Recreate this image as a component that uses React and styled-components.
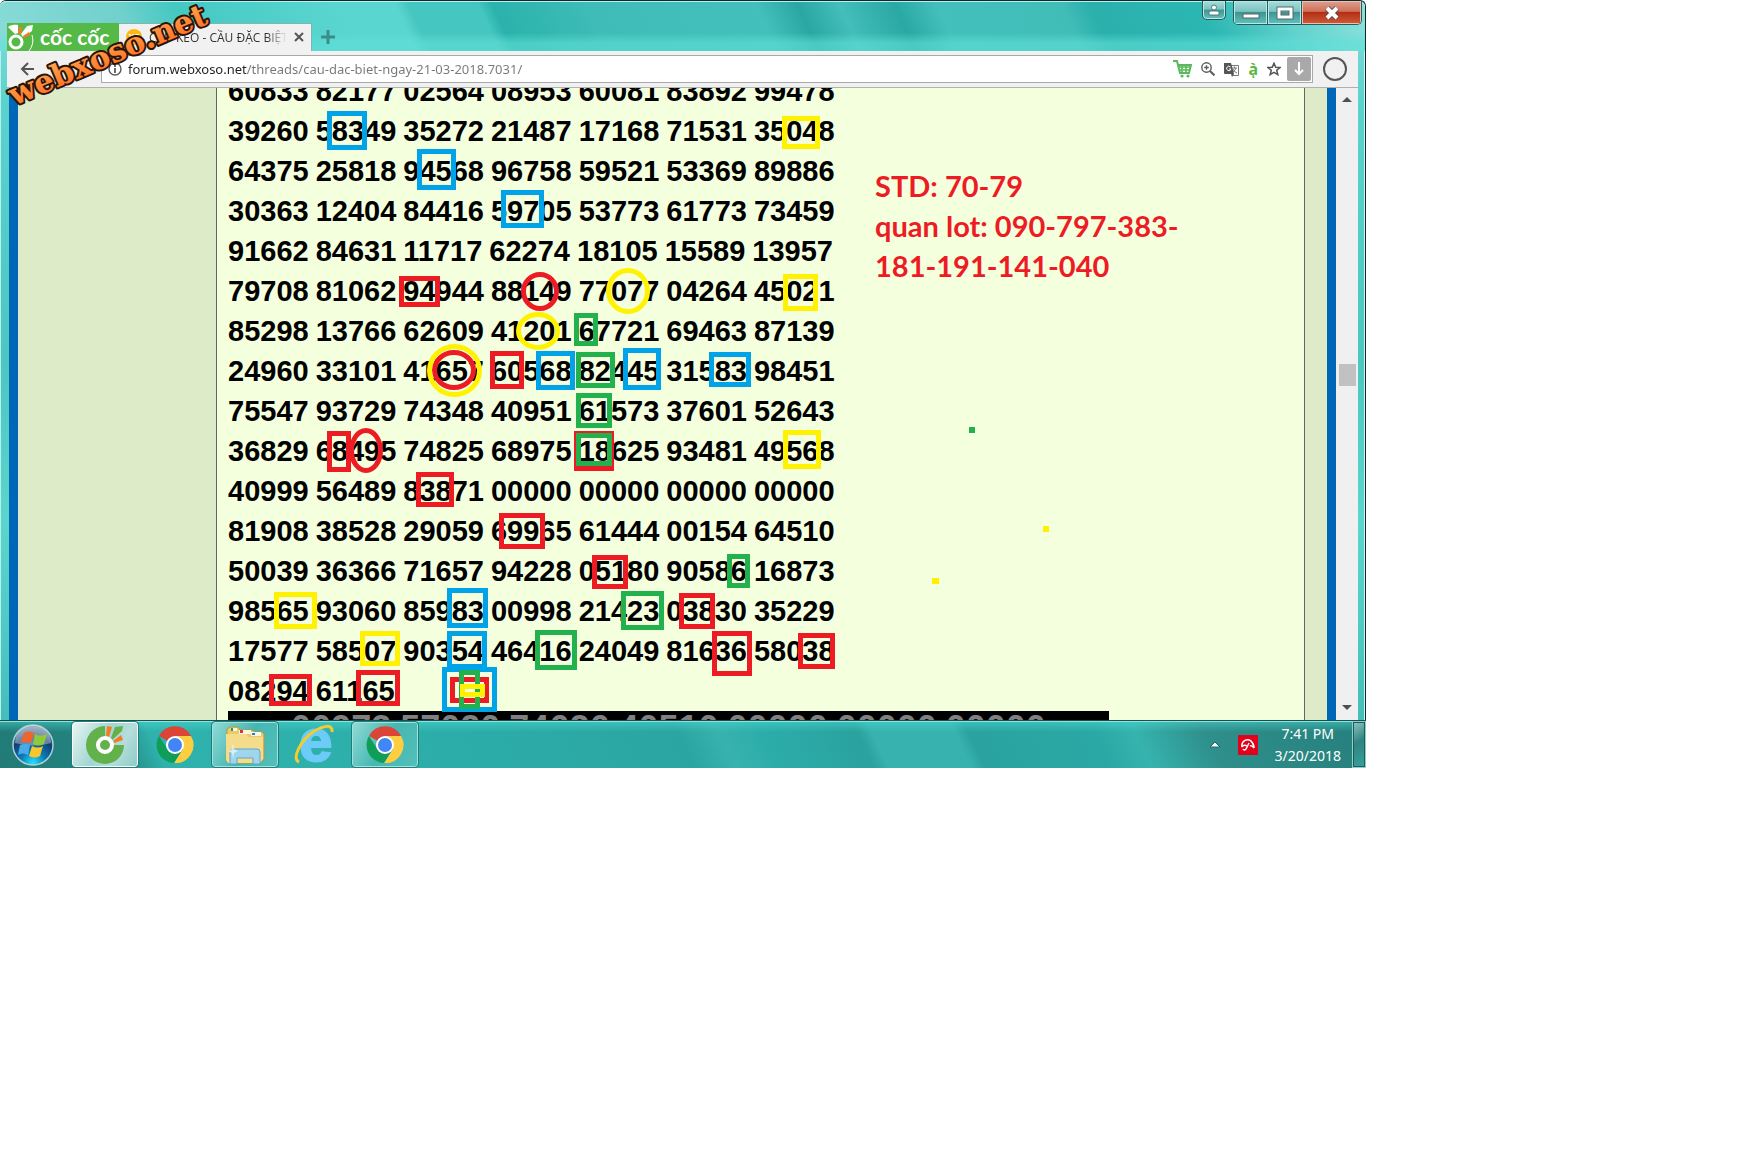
import React from "react";
import styled, { createGlobalStyle, css } from "styled-components";

//DATA
const rows = [
  "60833 82177 02564 08953 60081 83892 99478",
  "39260 58349 35272 21487 17168 71531 35048",
  "64375 25818 94568 96758 59521 53369 89886",
  "30363 12404 84416 59705 53773 61773 73459",
  "91662 84631 11717 62274 18105 15589 13957",
  "79708 81062 94944 88149 77077 04264 45021",
  "85298 13766 62609 41201 67721 69463 87139",
  "24960 33101 41657 60568 82445 31583 98451",
  "75547 93729 74348 40951 61573 37601 52643",
  "36829 68495 74825 68975 18625 93481 49568",
  "40999 56489 83871 00000 00000 00000 00000",
  "81908 38528 29059 69965 61444 00154 64510",
  "50039 36366 71657 94228 05180 90586 16873",
  "98565 93060 85983 00998 21423 03830 35229",
  "17577 58507 90354 46416 24049 81636 58038",
  "08294 61165",
];
const hiddenRow = "00973 57020 74626 40510 00000 00000 00000";

const red = "#ed1c24";
const blue = "#00a2e8";
const green = "#22b14c";
const yellow = "#fff200";

// outer edges of every mark: colour, left, top, right, bottom
const boxes = [
  [blue, 327, 111, 367, 150],
  [blue, 417, 149, 456, 190],
  [blue, 501, 190, 544, 228],
  [yellow, 782, 116, 820, 149],
  [red, 399, 276, 440, 307],
  [yellow, 783, 274, 818, 311],
  [green, 574, 313, 598, 346],
  [red, 490, 351, 524, 389],
  [blue, 536, 351, 575, 390],
  [green, 576, 352, 615, 388],
  [blue, 623, 348, 661, 390],
  [blue, 709, 352, 751, 387],
  [green, 576, 393, 612, 428],
  [red, 574, 431, 614, 471],
  [green, 576, 433, 612, 466],
  [yellow, 783, 430, 821, 469],
  [red, 327, 431, 351, 472],
  [red, 416, 472, 454, 507],
  [red, 499, 513, 545, 549],
  [red, 592, 555, 628, 589],
  [green, 727, 554, 750, 588],
  [yellow, 274, 592, 317, 629],
  [blue, 447, 588, 488, 628],
  [green, 621, 591, 664, 630],
  [red, 679, 593, 715, 629],
  [yellow, 360, 631, 400, 666],
  [blue, 447, 631, 487, 669],
  [green, 535, 630, 577, 670],
  [red, 712, 631, 752, 676],
  [red, 798, 633, 835, 669],
  [red, 269, 674, 312, 706],
  [red, 356, 670, 400, 706],
  [blue, 442, 667, 497, 712],
  [red, 450, 677, 489, 703],
  [green, 459, 670, 480, 709],
  [yellow, 460, 684, 485, 697],
];
const rings = [
  [red, 521, 272, 559, 311],
  [yellow, 606, 268, 650, 314],
  [yellow, 516, 312, 560, 350],
  [red, 432, 350, 476, 390],
  [yellow, 427, 344, 482, 397],
  [red, 349, 428, 383, 473],
];
const dots = [
  [green, 969, 427, 6],
  [yellow, 1043, 526, 6],
  [yellow, 932, 578, 7],
];

//ICONS
const Hand = () => (
  <svg width="28" height="28" viewBox="0 0 28 28">
    <circle cx="9" cy="19" r="6" fill="none" stroke="#fff" strokeWidth="3" />
    <path d="M1 4C5 1 11 2 11 2L11 10L8 11ZM14 11L20 3L26 2L25 8L16 14Z" fill="#fff" />
    <path d="M11 10L12 4L15 4L14 11ZM16 13L22 9L23 12L17 15Z" fill="#f47b20" />
    <path d="M25 12C27 19 25 24 22 28" fill="none" stroke="#fff" strokeWidth="1" />
  </svg>
);

const Chrome = () => (
  <svg width="38" height="38" viewBox="0 0 38 38">
    <path d="M19 19L3 10A18 18 0 0 1 35 10L19 10Z" fill="#db4437" />
    <path d="M19 10L35 10A18 18 0 0 1 18 37L27 23Z" fill="#ffcd40" />
    <path d="M3 10A18 18 0 0 0 18 37L26 24L12 24Z" fill="#0f9d58" />
    <circle cx="19" cy="19" r="9" fill="#fff" />
    <circle cx="19" cy="19" r="7" fill="#4285f4" />
  </svg>
);

const CocCoc = () => (
  <svg width="40" height="40" viewBox="0 0 40 40">
    <path d="M20 1A19 19 0 1 0 39 20L29 20L20 11Z" fill="#63b14b" />
    <path d="M22 1L27 2L24 12L21 11Z" fill="#f47b20" />
    <path d="M36 10L38 15L29 18L28 16Z" fill="#f47b20" />
    <path d="M30 2L38 1L37 6L27 15L26 13Z" fill="#63b14b" />
    <circle cx="20" cy="20" r="7" fill="#63b14b" stroke="#fff" strokeWidth="4" />
  </svg>
);

const Folder = () => (
  <svg width="42" height="40" viewBox="0 0 42 40">
    <path d="M3 4L6 2H14L16 5H28L31 7H38L40 9V34L36 38H4L2 34Z" fill="#e9cb6a" stroke="#b8963a" />
    <path d="M7 3H13V6H7Z" fill="#f7f7ee" />
    <path d="M15 5H27V9H15ZM27 7H37V11H27Z" fill="#f9f6e4" />
    <path d="M7 3H9V6H7Z" fill="#2c9d48" />
    <path d="M16 5H19V8H16Z" fill="#d33" />
    <path d="M28 8H31V10H28Z" fill="#2a7fc7" />
    <path d="M2 9H22L24 12H39V34L36 38H4L2 35Z" fill="#f4dc8b" />
    <path d="M6 39V27Q6 24 9 24H33Q36 24 36 27V39H29V33H13V39Z" fill="#9fd6ee" stroke="#5fa6cd" />
    <path d="M9 18L10 24L14 26L10 28L9 34L8 28L4 26L8 24Z" fill="#fff" opacity="0.6" />
  </svg>
);

const Explorer = () => (
  <svg width="42" height="42" viewBox="0 0 42 42">
    <text
      x="5"
      y="37"
      fontFamily="Liberation Sans"
      fontWeight="700"
      fontSize="60"
      fill="#6ccbf7"
      stroke="#6ccbf7"
      strokeWidth="2"
    >
      e
    </text>
    <path d="M5 38C-3 35 7 16 19 8C30 1 39 0 38 8" fill="none" stroke="#f5cb2d" strokeWidth="3" />
  </svg>
);

const Orb = () => (
  <svg width="44" height="44" viewBox="0 0 44 44">
    <defs>
      <radialGradient id="orb" cx="0.5" cy="0.95" r="0.9">
        <stop offset="0" stopColor="#27e3ff" />
        <stop offset="0.35" stopColor="#0a7ab5" />
        <stop offset="0.7" stopColor="#123e72" />
        <stop offset="1" stopColor="#6b8aa5" />
      </radialGradient>
    </defs>
    <circle cx="22" cy="22" r="20" fill="url(#orb)" stroke="#a7cfd6" strokeWidth="1.5" />
    <path d="M4 20A18 18 0 0 1 40 20Q22 25 4 20Z" fill="#fff" opacity="0.35" />
    <path d="M13 10Q18 7 23 10L20 20Q15 18 10 20Z" fill="#f0652b" />
    <path d="M24 11Q29 14 36 11L33 21Q27 24 22 21Z" fill="#8ecb3c" />
    <path d="M9 22Q14 20 19 22L17 32Q12 29 7 32Z" fill="#4aa9e8" />
    <path d="M21 23Q27 26 32 23L29 33Q24 36 18 33Z" fill="#fbc52c" />
  </svg>
);

const Cart = () => (
  <svg width="20" height="20" viewBox="0 0 20 20">
    <path d="M1 2H5L8 14H17L19 6H6" fill="none" stroke="#5cb85c" strokeWidth="2" />
    <path d="M6 8H18M7 11H17M10 6V14M14 6V14" stroke="#5cb85c" strokeWidth="1.6" />
    <circle cx="10" cy="17" r="1.6" fill="#5cb85c" />
    <circle cx="16" cy="17" r="1.6" fill="#5cb85c" />
  </svg>
);

const Zoom = () => (
  <svg width="14" height="14" viewBox="0 0 14 14" fill="none" stroke="#5a5a5a">
    <circle cx="5.5" cy="5.5" r="4.7" strokeWidth="1.4" />
    <path d="M9 9L13.4 13.4" strokeWidth="2" />
    <path d="M5.5 3.2V7.8M3.2 5.5H7.8" strokeWidth="1.3" />
  </svg>
);

const Translate = () => (
  <svg width="15" height="15" viewBox="0 0 15 15">
    <path d="M6.5 3.5H14.5V13.5H9" fill="#fff" stroke="#777" />
    <path d="M8 6H13M10.5 4.5V6M12 6Q11 9 8 11M9 7Q10 10 13 11" fill="none" stroke="#777" />
    <path d="M0 1H7L10 12H1Q0 12 0 11Z" fill="#555" />
    <path d="M6.5 5A2.2 2.2 0 1 0 7 7H5" fill="none" stroke="#fff" />
    <path d="M7 12H10L8 15Z" fill="#555" />
  </svg>
);

const Star = () => (
  <svg width="14" height="14" viewBox="0 0 14 14">
    <path
      d="M7 1.2L8.7 5.2L13 5.5L9.7 8.3L10.8 12.6L7 10.3L3.2 12.6L4.3 8.3L1 5.5L5.3 5.2Z"
      fill="none"
      stroke="#555"
      strokeWidth="1.5"
    />
  </svg>
);

const Umbrella = () => (
  <svg width="20" height="20" viewBox="0 0 20 20">
    <rect width="20" height="20" rx="1" fill="#e2001a" />
    <path d="M4 12C3 6 9 3 13 6Q16 9 16 13" fill="none" stroke="#fff" strokeWidth="1.6" />
    <path d="M4 12Q6 9 9 11M16 13Q14 10 12 11" fill="none" stroke="#fff" strokeWidth="1.4" />
    <path d="M11 8L8 14Q6 16 5 14" fill="none" stroke="#fff" strokeWidth="1.4" />
  </svg>
);

const Watermark = () => (
  <Logo viewBox="0 0 230 120">
    <defs>
      <linearGradient id="flame" x1="0" y1="0" x2="0" y2="1">
        <stop offset="0.2" stopColor="#ffa04c" />
        <stop offset="1" stopColor="#ff6a1c" />
      </linearGradient>
    </defs>
    <text x="14" y="105" transform="rotate(-23 14 105)">
      webxoso.net
    </text>
  </Logo>
);

const Marks = () => (
  <Overlay aria-hidden="true">
    <g transform="translate(-217 -88)" fill="none" strokeWidth="5">
      {boxes.map(([color, x, y, right, bottom]) => (
        <rect
          key={`${x}-${y}`}
          x={x + 2.5}
          y={y + 2.5}
          width={right - x - 5}
          height={bottom - y - 5}
          stroke={color}
        />
      ))}
      {rings.map(([color, x, y, right, bottom]) => (
        <ellipse
          key={`${x}-${y}`}
          cx={(x + right) / 2}
          cy={(y + bottom) / 2}
          rx={(right - x - 5) / 2}
          ry={(bottom - y - 5) / 2}
          stroke={color}
        />
      ))}
      {dots.map(([color, x, y, width]) => (
        <rect key={x} x={x} y={y} width={width} height="6" fill={color} stroke="none" />
      ))}
    </g>
  </Overlay>
);

const Groups = ({ text }) => text.split(" ").map((group, i) => <span key={i}>{group} </span>);

const App = () => {
  return (
    <>
      <GlobalStyle />
      <Desktop>
        <Window>
          <TitleBar>
            <Brand type="button">
              <Hand />
              cốc cốc
            </Brand>
            <Tab>
              <Favicon>XS</Favicon>
              <TabTitle>CẦU KÈO - CẦU ĐẶC BIỆT</TabTitle>
              <PlainButton aria-label="Close tab">
                <svg width="10" height="10" stroke="#555" strokeWidth="2">
                  <path d="M1 1L9 9M9 1L1 9" />
                </svg>
              </PlainButton>
            </Tab>
            <NewTab aria-label="New tab">
              <svg width="14" height="14" stroke="#3a8d89" strokeWidth="3">
                <path d="M7 0V14M0 7H14" />
              </svg>
            </NewTab>
            <Controls>
              <UserButton aria-label="User">
                <svg width="12" height="12" fill="#fff" stroke="#4b7f80">
                  <circle cx="6" cy="3.5" r="2.5" />
                  <path d="M1 11V8Q1 7 3 7H9Q11 7 11 8V11Z" />
                </svg>
              </UserButton>
              <ControlGroup>
                <Control aria-label="Minimize">
                  <svg width="18" height="16">
                    <rect x="1" y="9" width="16" height="4" fill="#fff" stroke="#57696b" />
                  </svg>
                </Control>
                <Control aria-label="Maximize">
                  <svg width="18" height="16" fill="none">
                    <rect x="3" y="4" width="12" height="8" stroke="#57696b" strokeWidth="5" />
                    <rect x="3" y="4" width="12" height="8" stroke="#fff" strokeWidth="3" />
                  </svg>
                </Control>
                <Control $close aria-label="Close">
                  <svg width="18" height="16">
                    <path d="M4 3L14 13M14 3L4 13" stroke="#5a4b50" strokeWidth="6" />
                    <path d="M4 3L14 13M14 3L4 13" stroke="#fff" strokeWidth="4" />
                  </svg>
                </Control>
              </ControlGroup>
            </Controls>
          </TitleBar>
          <ToolBar>
            <Nav>
              <PlainButton aria-label="Back">
                <svg width="14" height="14" fill="none" stroke="#555" strokeWidth="2">
                  <path d="M14 7H2M8 1L2 7L8 13" />
                </svg>
              </PlainButton>
            </Nav>
            <AddressBar>
              <svg width="14" height="14" fill="none" stroke="#5a5a5a">
                <circle cx="7" cy="7" r="6" strokeWidth="1.4" />
                <path d="M7 6V11M7 3V5" strokeWidth="1.8" />
              </svg>
              <Address
                aria-label="Address"
                defaultValue="forum.webxoso.net/threads/cau-dac-biet-ngay-21-03-2018.7031/"
              />
              <Actions>
                <Cart />
                <Zoom />
                <Translate />
                <Accent>à̩</Accent>
                <Star />
              </Actions>
              <Download aria-label="Download">
                <svg width="14" height="16" fill="none" stroke="#fff" strokeWidth="2">
                  <path d="M7 1V13M3 9L7 13L11 9" />
                </svg>
              </Download>
            </AddressBar>
            <Profile aria-label="Menu" />
          </ToolBar>
          <Page>
            <Post>
              <Board>
                <Numbers>
                  {rows.map((row) => (
                    <Row key={row}>
                      <Groups text={row} />
                    </Row>
                  ))}
                </Numbers>
                <Note>
                  STD: 70-79
                  <br />
                  quan lot: 090-797-383-
                  <br />
                  181-191-141-040
                </Note>
              </Board>
              <HiddenRow>
                <Groups text={hiddenRow} />
              </HiddenRow>
              <Marks />
            </Post>
            <Edge />
            <ScrollBar>
              <svg width="10" height="6" fill="#505050">
                <path d="M0 5L5 0L10 5Z" />
              </svg>
              <Thumb />
              <svg width="10" height="6" fill="#505050">
                <path d="M0 0L5 5L10 0Z" />
              </svg>
            </ScrollBar>
          </Page>
          <Watermark />
        </Window>
        <TaskBar>
          <Start aria-label="Start">
            <Orb />
          </Start>
          <Tasks>
            <Task $active aria-label="Cốc Cốc">
              <CocCoc />
            </Task>
            <Task aria-label="Chrome">
              <Chrome />
            </Task>
            <Task $open aria-label="Files">
              <Folder />
            </Task>
            <Task aria-label="Internet Explorer">
              <Explorer />
            </Task>
            <Task $open aria-label="Chrome window">
              <Chrome />
            </Task>
          </Tasks>
          <Tray>
            <svg width="12" height="7" fill="#fff" stroke="#1d6b69">
              <path d="M1 6L6 1L11 6Z" />
            </svg>
            <Umbrella />
            <Clock>
              7:41 PM
              <br />
              3/20/2018
            </Clock>
          </Tray>
          <ShowDesktop aria-label="Show desktop" />
        </TaskBar>
      </Desktop>
    </>
  );
};

//STYLING
const GlobalStyle = createGlobalStyle`
  * {
    box-sizing: border-box;
  }
  body {
    margin: 0;
    background: #fff;
    font-family: "Open Sans", "Noto Sans", sans-serif;
  }
  button {
    border: none;
    padding: 0;
    background: none;
    font: inherit;
  }
  svg {
    display: block;
    flex-shrink: 0;
  }
`;

const Desktop = styled.main`
  width: calc(100% - 374px);
  min-width: 1200px;
`;
const Window = styled.section`
  position: relative;
  border: 1px solid #10292b;
  border-width: 1px 1px 0 0;
  border-radius: 6px 6px 0 0;
  box-shadow: inset 1px 1px #b9efec, inset -1px 0 #c8f4f1;
  background: linear-gradient(#8adcd8, #5ad3cf 100px, #4bc6c0 360px, #5ad6cf 520px, #45beb9);
`;
const TitleBar = styled.header`
  display: flex;
  align-items: flex-end;
  height: 50px;
  padding: 0 3px 0 7px;
  border-radius: 6px 6px 0 0;
  box-shadow: inset 0 1px #b9efec;
  background: linear-gradient(transparent 32px, rgba(96, 224, 216, 0.6) 42px),
    linear-gradient(
      65deg,
      #8adcd8 0%,
      #70d0cc 10%,
      #45c8c2 14%,
      #5ad6d0 26%,
      #5ad6d0 30%,
      #46c6c0 31%,
      #46c6c0 36%,
      #2bb2ac 37%,
      #3fbcb7 44%,
      #43c0bc 56%,
      #2aa7a3 59%,
      #43beba 62%,
      #2aa8a4 66%,
      #43c0bc 69%,
      #41bdb8 78%,
      #2bb0ac 80%,
      #2cb7b3 88%,
      #62d2cd 94%,
      #8de2dd 100%
    );
`;
const Brand = styled.button`
  display: flex;
  align-items: center;
  gap: 5px;
  width: 112px;
  height: 28px;
  background: #55b948;
  color: #fff;
  font-family: Lato, "Noto Sans", sans-serif;
  font-size: 21px;
  font-weight: 700;
  line-height: 28px;
  white-space: nowrap;
`;
const Tab = styled.div`
  display: flex;
  align-items: center;
  gap: 7px;
  width: 193px;
  height: 28px;
  padding: 0 8px 0 7px;
  background: #f1f1f1;
  box-shadow: inset -1px 1px #7fb5b2;
`;
const Favicon = styled.span`
  width: 16px;
  height: 16px;
  border-radius: 50%;
  background: #fdb813;
  color: #fff;
  font-size: 9px;
  font-weight: 700;
  line-height: 16px;
  text-align: center;
`;
const TabTitle = styled.span`
  flex: 1;
  overflow: hidden;
  color: #333;
  font-size: 12px;
  white-space: nowrap;
  mask-image: linear-gradient(90deg, #000 85%, transparent);
`;
const PlainButton = styled.button`
  display: flex;
`;
const NewTab = styled(PlainButton)`
  align-self: flex-end;
  padding: 7px 9px;
`;
const Controls = styled.div`
  display: flex;
  align-self: flex-start;
  gap: 7px;
  margin-left: auto;
`;
const glass = css`
  display: flex;
  align-items: center;
  justify-content: center;
  background: linear-gradient(#a4dedc, #7cc3c1 45%, #3f9491 50%, #62c2be);
`;
const UserButton = styled.button`
  ${glass}
  width: 24px;
  height: 19px;
  border: 1px solid #2a5a5b;
  border-top: none;
  border-radius: 0 0 5px 5px;
  box-shadow: inset 0 0 0 1px #b9e9e6;
`;
const ControlGroup = styled.div`
  display: flex;
  height: 24px;
  border: 1px solid #2a5a5b;
  border-top: none;
  border-radius: 0 0 5px 5px;
  overflow: hidden;
`;
const Control = styled.button`
  ${glass}
  width: 34px;
  border-right: 1px solid #2a5a5b;
  box-shadow: inset 0 0 0 1px #b9e9e6;
  ${({ $close }) =>
    $close &&
    css`
      width: 59px;
      border-right: none;
      background: linear-gradient(#dfa090, #cf7058 45%, #b32f14 50%, #cf5c3c);
      box-shadow: inset 0 0 0 1px #ecc0b4;
    `}
`;
const ToolBar = styled.div`
  display: flex;
  align-items: center;
  height: 37px;
  margin: 0 7px;
  border-bottom: 1px solid #b0b0b0;
  background: #f1f1f1;
`;
const Nav = styled.nav`
  width: 94px;
  padding-left: 13px;
`;
const AddressBar = styled.div`
  display: flex;
  flex: 1;
  align-items: center;
  height: 28px;
  padding: 0 1px 0 6px;
  border: 1px solid #a9a9a9;
  background: #fff;
`;
const Address = styled.input`
  flex: 1;
  min-width: 0;
  padding: 0 6px;
  border: none;
  outline: none;
  background: linear-gradient(90deg, #222 125px, #777 125px);
  background-clip: text;
  color: transparent;
  font-family: "Noto Sans", sans-serif;
  font-size: 13px;
`;
const Actions = styled.div`
  display: flex;
  align-items: center;
  gap: 9px;
  margin-right: 6px;
`;
const Accent = styled.span`
  color: #5cb83c;
  font-size: 16px;
  font-weight: 700;
  line-height: 20px;
`;
const Download = styled.button`
  display: flex;
  align-items: center;
  justify-content: center;
  width: 24px;
  height: 24px;
  border-radius: 2px;
  background: #a9a9a9;
`;
const Profile = styled.button`
  width: 24px;
  height: 24px;
  margin: 0 11px 0 10px;
  border: 2px solid #555;
  border-radius: 50%;
`;
const Page = styled.div`
  display: flex;
  margin: 0 7px 0 9px;
  border-left: 9px solid #0066b8;
  background: #deebc8;
`;
const Post = styled.article`
  position: relative;
  flex: 1;
  margin-left: 198px;
  padding-left: 11px;
  border: 1px solid #666;
  border-width: 0 1px;
  overflow: hidden;
  background: #f4ffde;
`;
const Board = styled.div`
  display: flex;
  margin-top: -17px;
`;
const Numbers = styled.div`
  width: 647px;
`;
const Row = styled.p`
  display: flex;
  gap: 7px;
  margin: 0;
  color: #000;
  font-family: "Liberation Sans", Arial, sans-serif;
  font-size: 29px;
  font-weight: 700;
  line-height: 40px;
`;
const Note = styled.p`
  margin: 95px 0 0;
  color: #ed1c24;
  font-family: Lato, Carlito, sans-serif;
  font-size: 29px;
  font-weight: 700;
  line-height: 40px;
  white-space: nowrap;
`;
const HiddenRow = styled(Row)`
  justify-content: center;
  gap: 9px;
  width: 881px;
  height: 9px;
  overflow: hidden;
  background: #000;
  color: #808080;
  font-size: 36px;
  line-height: 36px;
`;
const Overlay = styled.svg`
  position: absolute;
  top: 0;
  left: 0;
  width: 100%;
  height: 100%;
`;
const Edge = styled.div`
  width: 31px;
  border-right: 9px solid #0066b8;
`;
const ScrollBar = styled.div`
  display: grid;
  grid-template-rows: 6px 9fr 22px 11fr 6px;
  justify-items: center;
  width: 22px;
  padding: 9px 0;
  background: #f0f0f0;
  svg:last-child {
    grid-row: 5;
  }
`;
const Thumb = styled.div`
  grid-row: 3;
  width: 17px;
  background: #c1c1c1;
`;
const Logo = styled.svg`
  position: absolute;
  top: 0;
  left: 0;
  width: 230px;
  height: 120px;
  text {
    fill: url(#flame);
    stroke: #2a1408;
    stroke-width: 4px;
    stroke-linejoin: round;
    paint-order: stroke;
    font-family: "DejaVu Serif", serif;
    font-size: 31px;
    font-weight: 700;
  }
`;
const TaskBar = styled.footer`
  display: flex;
  height: 48px;
  border-top: 1px solid #14514f;
  box-shadow: inset 0 1px #8fe3df;
  background: linear-gradient(rgba(80, 220, 212, 0.5), transparent 11px),
    linear-gradient(
      65deg,
      #217a76 0%,
      #248682 9%,
      #2fb2ad 12%,
      #2cadaa 34%,
      #2ba5a1 50%,
      #38b2ae 53%,
      #2cadaa 56%,
      #2aa29f 63%,
      #37b2ae 64%,
      #37b2ae 70%,
      #2aa3a0 71%,
      #2aa8a5 80%,
      #36b3ae 83%,
      #2f8f8b 88%,
      #257f7c 100%
    );
`;
const Start = styled.button`
  display: flex;
  align-items: center;
  padding-left: 11px;
  width: 72px;
`;
const Tasks = styled.div`
  display: flex;
  gap: 4px;
  padding-top: 1px;
`;
const Task = styled.button`
  display: flex;
  align-items: center;
  justify-content: center;
  width: 66px;
  height: 45px;
  border-radius: 3px;
  ${({ $open }) =>
    $open &&
    css`
      border: 1px solid #a5e0dd;
      outline: 1px solid #1f7d7a;
      outline-offset: 0;
      background: linear-gradient(120deg, #8fdad6, #45b7b2 50%, #52bfba);
    `}
  ${({ $active }) =>
    $active &&
    css`
      border: 1px solid #fff;
      outline: 1px solid #1f7d7a;
      background: linear-gradient(120deg, #e6f6f5, #a3d5d2 45%, #b5dddb 70%, #8cccc8);
    `}
`;
const Tray = styled.div`
  display: flex;
  align-items: center;
  gap: 17px;
  margin-left: auto;
  margin-right: 11px;
`;
const Clock = styled.time`
  color: #fff;
  font-family: "Noto Sans", sans-serif;
  font-size: 14px;
  line-height: 22px;
  text-align: center;
`;
const ShowDesktop = styled.button`
  width: 14px;
  border: 1px solid #8fd0cd;
  outline: 1px solid #1c5d5b;
  outline-offset: -2px;
  background: linear-gradient(150deg, #8fc5c2, #2f8481 45%, #3aa19d);
`;

export default App;
